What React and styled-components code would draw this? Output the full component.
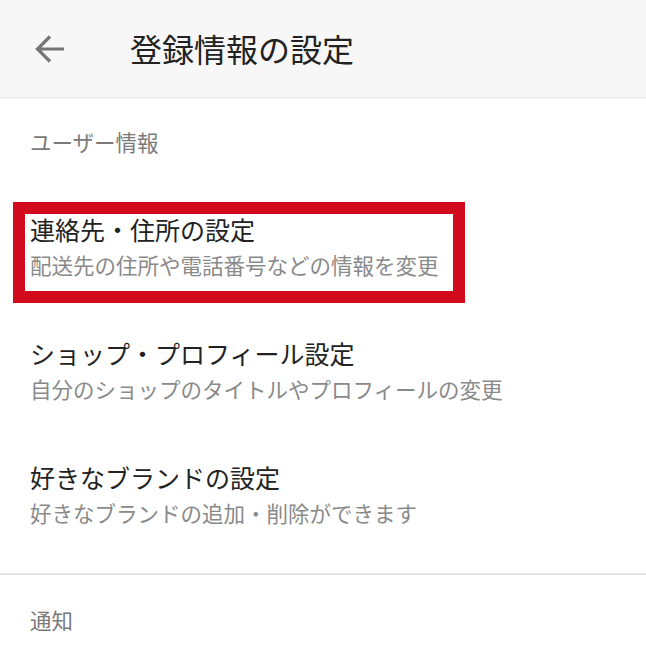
import React from 'react';
import styled, { createGlobalStyle } from 'styled-components';

const GlobalStyle = createGlobalStyle`
  html, body {
    margin: 0;
    padding: 0;
    background: #ffffff;
  }
  body {
    font-family: "Noto Sans CJK JP", "Noto Sans", sans-serif;
  }
`;

const Page = styled.div`
  width: 646px;
  min-height: 653px;
  background: #ffffff;
  overflow: hidden;
`;

const Header = styled.header`
  height: 97px;
  display: flex;
  align-items: center;
  padding-left: 32px;
  background: #f7f7f7;
  box-shadow: 0 1px 2px rgba(0, 0, 0, 0.12);
  position: relative;
  z-index: 1;
`;

const BackButton = styled.button`
  width: 36px;
  height: 36px;
  padding: 0;
  border: none;
  background: none;
  display: flex;
  align-items: center;
  justify-content: center;
  margin-right: 62px;
`;

const Title = styled.h1`
  margin: 0;
  font-size: 32px;
  font-weight: 400;
  color: #222222;
  line-height: 1.4;
`;

const Section = styled.section`
  padding-bottom: 17px;
  border-bottom: ${props => (props.divided ? '2px solid #e2e2e2' : 'none')};
`;

const SectionLabel = styled.div`
  padding: 30px 30px 27px;
  font-size: 21.5px;
  line-height: 1.4;
  color: #7a7a7a;
`;

const Item = styled.div`
  position: relative;
  padding: 28px 30px 29px;
`;

const ItemTitle = styled.div`
  font-size: 25px;
  line-height: 35px;
  color: #222222;
`;

const ItemSub = styled.div`
  margin-top: 3px;
  font-size: 21.5px;
  line-height: 29px;
  color: #8a8a8a;
`;

// red annotation frame drawn over the highlighted row
const Highlight = styled.div`
  position: absolute;
  left: 13px;
  top: 18px;
  width: 452px;
  height: 101px;
  box-sizing: border-box;
  border: 12px solid #d20a1e;
  pointer-events: none;
`;

const items = [
  {
    title: '連絡先・住所の設定',
    sub: '配送先の住所や電話番号などの情報を変更',
    highlight: true
  },
  {
    title: 'ショップ・プロフィール設定',
    sub: '自分のショップのタイトルやプロフィールの変更'
  },
  {
    title: '好きなブランドの設定',
    sub: '好きなブランドの追加・削除ができます'
  }
];

const ArrowBack = () => (
  <svg width="32" height="32" viewBox="0 0 32 32" fill="none">
    <path
      d="M30 16H4M16 3.5L3.5 16L16 28.5"
      stroke="#767676"
      strokeWidth="3.2"
      strokeLinecap="butt"
      strokeLinejoin="miter"
    />
  </svg>
);

const App = () => (
  <Page>
    <GlobalStyle />
    <Header>
      <BackButton aria-label="戻る">
        <ArrowBack />
      </BackButton>
      <Title>登録情報の設定</Title>
    </Header>

    <Section divided>
      <SectionLabel>ユーザー情報</SectionLabel>
      {items.map(item => (
        <Item key={item.title}>
          {item.highlight && <Highlight />}
          <ItemTitle>{item.title}</ItemTitle>
          <ItemSub>{item.sub}</ItemSub>
        </Item>
      ))}
    </Section>

    <Section>
      <SectionLabel>通知</SectionLabel>
    </Section>
  </Page>
);

export default App;
